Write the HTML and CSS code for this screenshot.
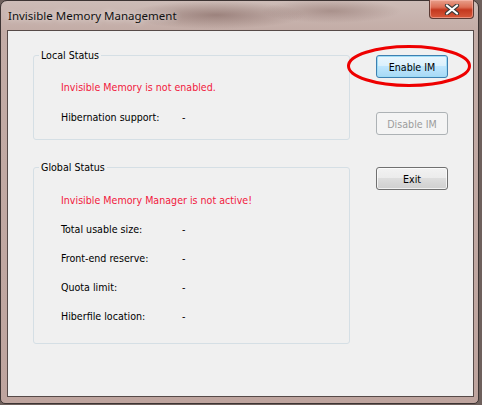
FILE: index.html
```html
<!DOCTYPE html>
<html lang="en">
<head>
  <meta charset="UTF-8">
  <title>Invisible Memory Management</title>
  <link rel="stylesheet" href="styles.css">
</head>
<body>
  <div class="window">
    <div class="titlebar">
      <span class="title">Invisible Memory Management</span>
      <div class="close-btn">
        <svg width="16" height="11" viewBox="0 0 16 11">
          <path d="M3 1.5 L13 9.5 M13 1.5 L3 9.5" stroke="#3a3a3a" stroke-width="4.2" stroke-linecap="round"/>
          <path d="M3 1.5 L13 9.5 M13 1.5 L3 9.5" stroke="#ffffff" stroke-width="2.2" stroke-linecap="round"/>
        </svg>
      </div>
    </div>

    <div class="client">
      <div class="groups">
        <fieldset class="group local">
          <legend>Local Status</legend>
          <div class="rows">
            <div class="row warn">Invisible Memory is not enabled.</div>
            <div class="row"><span class="key">Hibernation support:</span><span>-</span></div>
          </div>
        </fieldset>

        <fieldset class="group global">
          <legend>Global Status</legend>
          <div class="rows">
            <div class="row warn">Invisible Memory Manager is not active!</div>
            <div class="row"><span class="key">Total usable size:</span><span>-</span></div>
            <div class="row"><span class="key">Front-end reserve:</span><span>-</span></div>
            <div class="row"><span class="key">Quota limit:</span><span>-</span></div>
            <div class="row"><span class="key">Hiberfile location:</span><span>-</span></div>
          </div>
        </fieldset>
      </div>

      <div class="actions">
        <button class="btn default">Enable IM</button>
        <button class="btn second" disabled>Disable IM</button>
        <button class="btn third">Exit</button>
      </div>
    </div>

    <svg class="mark" width="126" height="44" viewBox="0 0 126 44">
      <ellipse cx="63" cy="22" rx="60.5" ry="19.5" fill="none" stroke="#ee0000" stroke-width="3"/>
    </svg>
  </div>
</body>
</html>
```

FILE: styles.css
```css
body {
  margin: 0;
  width: 482px;
  height: 405px;
  background: #6e605c;
  font-family: Tahoma, "DejaVu Sans Condensed", "Liberation Sans", sans-serif;
  font-size: 10.6px;
  overflow: hidden;
}
.window {
  position: relative;
  box-sizing: border-box;
  width: 479px;
  height: 404px;
  padding: 0 4px 6px 6px;
  border: 1px solid #3d3433;
  border-radius: 7px 7px 5px 5px;
  background:
    radial-gradient(ellipse 90px 14px at 215px 14px, rgba(120, 90, 84, 0.55), transparent),
    radial-gradient(ellipse 70px 12px at 330px 10px, rgba(130, 100, 94, 0.45), transparent),
    linear-gradient(to bottom, #cdbcb7 0, #c3aca6 30px, #bea49e 100%);
  display: flex;
  flex-direction: column;
}
.titlebar {
  height: 29px;
  display: flex;
  align-items: flex-start;
}
.title {
  margin: 7px 0 0 1px;
  font-family: "Noto Sans", "Open Sans", sans-serif;
  font-size: 11.5px;
  color: #111;
  text-shadow: 0 0 6px rgba(255, 255, 255, 0.8);
}
.close-btn {
  margin: -1px 0 0 auto;
  width: 45px;
  height: 19px;
  box-sizing: border-box;
  border: 1px solid #5b3a34;
  border-top: none;
  border-radius: 0 0 4px 4px;
  background: linear-gradient(to bottom, #e8a08c 0, #dc6e55 40%, #c4381f 55%, #d6583a 100%);
  box-shadow: inset 0 0 0 1px rgba(255, 200, 190, 0.5);
  display: flex;
  align-items: center;
  justify-content: center;
}
.client {
  flex: 1;
  background: #f0f0f0;
  border: 1px solid #564a48;
  display: grid;
  grid-template-columns: 317px 72px;
  column-gap: 26px;
  align-items: start;
  padding: 17px 0 0 25px;
  color: #000;
}
.groups {
  display: flex;
  flex-direction: column;
  gap: 20px;
}
.group {
  margin: 0;
  padding: 0;
  border: 1px solid #d5dfe5;
  border-radius: 3px;
  min-inline-size: 0;
}
.group legend {
  margin-left: 5px;
  padding: 0 2px;
  line-height: 14px;
}
.rows {
  display: flex;
  flex-direction: column;
  gap: 16px;
  padding: 18px 0 15px 27px;
}
.global .rows {
  padding-top: 19px;
  padding-bottom: 20px;
  gap: 15px;
}
.row {
  line-height: 14px;
  display: flex;
}
.row .key {
  width: 121px;
}
.warn {
  color: #f2193d;
}
.actions {
  display: flex;
  flex-direction: column;
  padding-top: 7px;
}
.btn {
  width: 72px;
  height: 23px;
  padding: 0;
  font-family: inherit;
  font-size: 10.6px;
  color: #000;
  border: 1px solid #707070;
  border-radius: 3px;
  background: linear-gradient(to bottom, #f2f2f2 0, #ebebeb 49%, #dddddd 50%, #cfcfcf 100%);
  box-shadow: inset 0 0 0 1px rgba(255, 255, 255, 0.7);
}
.btn.default {
  border-color: #3c7fb1;
  background: linear-gradient(to bottom, #eaf6fd 0, #d9f0fc 49%, #bee6fd 50%, #a7d9f5 100%);
  box-shadow: inset 0 0 0 1px #9fdcf5;
}
.btn.second {
  margin-top: 34px;
  color: #9c9c9c;
  border-color: #adb2b5;
  background: #f4f4f4;
  box-shadow: none;
}
.btn.third {
  margin-top: 32px;
}
.mark {
  position: absolute;
  left: 345px;
  top: 43px;
}
```
